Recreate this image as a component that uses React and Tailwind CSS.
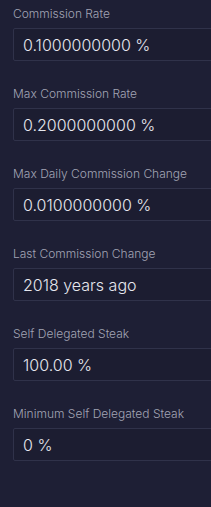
import React from 'react';

const fields = [
    { label: 'Commission Rate', value: '0.1000000000 %' },
    { label: 'Max Commission Rate', value: '0.2000000000 %' },
    { label: 'Max Daily Commission Change', value: '0.0100000000 %' },
    { label: 'Last Commission Change', value: '2018 years ago' },
    { label: 'Self Delegated Steak', value: '100.00 %' },
    { label: 'Minimum Self Delegated Steak', value: '0 %' },
];

const Field = ({ label, value }) => (
    <div className="flex flex-col">
        <span className="text-xs leading-4 font-light text-[#a2a4b4] mb-[6px]">{label}</span>
        <div className="w-[240px] h-[33px] flex items-center px-[9px] rounded-[2px] border border-[#30324a] bg-[#1c1d31] text-base font-light text-[#e6e7ee]">
            {value}
        </div>
    </div>
);

export default function App() {
    return (
        <div
            className="min-h-screen w-full overflow-hidden bg-[#1e1f35] pl-[13px] pt-[6px] flex flex-col gap-[25px]"
            style={{ fontFamily: 'Inter, "Noto Sans", sans-serif' }}
        >
            {fields.map((f) => (
                <Field key={f.label} label={f.label} value={f.value} />
            ))}
        </div>
    );
}
